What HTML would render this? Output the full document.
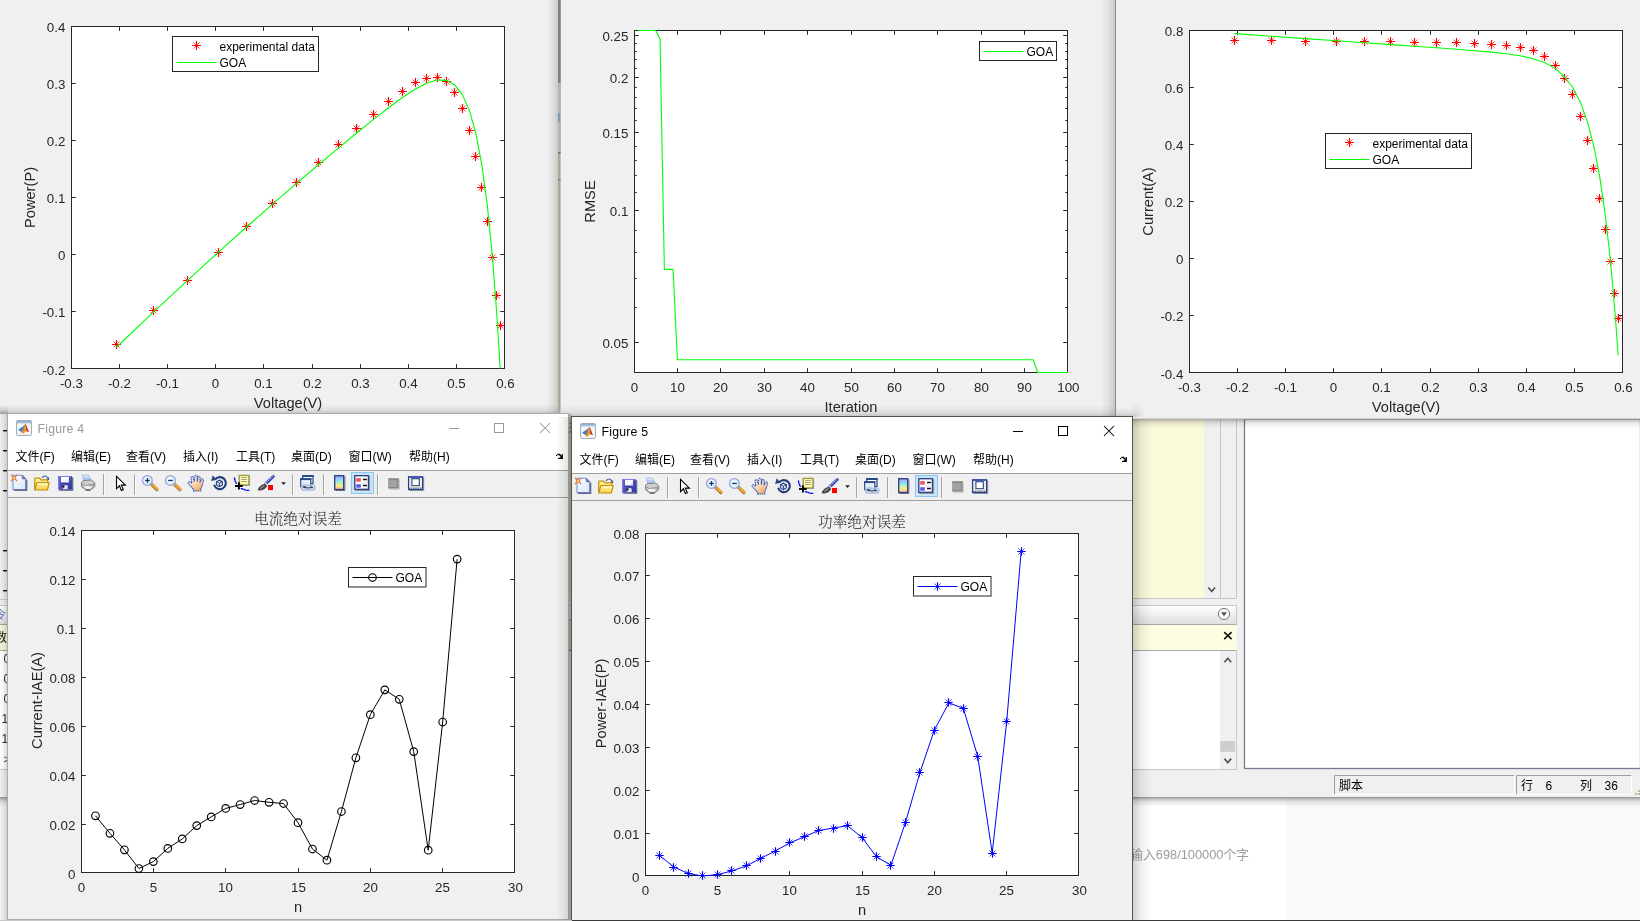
<!DOCTYPE html>
<html lang="zh-CN"><head><meta charset="utf-8"><title>MATLAB figures</title>
<style>
html,body{margin:0;padding:0;background:#f0f0f0;}
body{width:1640px;height:921px;overflow:hidden;position:relative;}
svg{position:absolute;left:0;top:0;display:block;font-family:"Liberation Sans", "Noto Sans CJK SC", sans-serif;will-change:transform;}
text{white-space:pre;}
</style></head><body>
<svg width="1640" height="921" viewBox="0 0 1640 921">
<defs>
<linearGradient id="shD" x1="0" y1="0" x2="0" y2="1"><stop offset="0" stop-color="#000" stop-opacity=".30"/><stop offset=".4" stop-color="#000" stop-opacity=".10"/><stop offset="1" stop-color="#000" stop-opacity="0"/></linearGradient>
<linearGradient id="shU" x1="0" y1="1" x2="0" y2="0"><stop offset="0" stop-color="#000" stop-opacity=".20"/><stop offset=".4" stop-color="#000" stop-opacity=".07"/><stop offset="1" stop-color="#000" stop-opacity="0"/></linearGradient>
<linearGradient id="shR" x1="0" y1="0" x2="1" y2="0"><stop offset="0" stop-color="#000" stop-opacity=".19"/><stop offset=".45" stop-color="#000" stop-opacity=".06"/><stop offset="1" stop-color="#000" stop-opacity="0"/></linearGradient>
<linearGradient id="shL" x1="1" y1="0" x2="0" y2="0"><stop offset="0" stop-color="#000" stop-opacity=".16"/><stop offset=".5" stop-color="#000" stop-opacity=".06"/><stop offset="1" stop-color="#000" stop-opacity="0"/></linearGradient>
<linearGradient id="hdr" x1="0" y1="0" x2="0" y2="1"><stop offset="0" stop-color="#fff"/><stop offset="1" stop-color="#dedede"/></linearGradient>
</defs>

<rect x="1132" y="797" width="154" height="124" fill="#fff"/><rect x="1286" y="797" width="354" height="124" fill="#fafafa"/><text x="1130.2" y="858.6" font-size="12.8" text-anchor="start" fill="#9c9ca0">输入698/100000个字</text><rect x="1132" y="419" width="508" height="378" fill="#f0f0f0"/><rect x="1132" y="419" width="72" height="179" fill="#fbfadb"/><path d="M1220.5 419V598M1236.5 419V598.5H1132" stroke="#c4c4c4" fill="none"/><path d="M1208.3 587.5l3.4 4 3.4-4" stroke="#555" stroke-width="1.7" fill="none"/><rect x="1132" y="605.5" width="104.5" height="19" fill="url(#hdr)" stroke="#c8c8c8"/><circle cx="1224" cy="614" r="5.6" fill="#fafafa" stroke="#777" stroke-width="1"/><path d="M1221 612.3h6l-3 4z" fill="#555"/><rect x="1132" y="625" width="104.5" height="25.5" fill="#fdfde1"/><path d="M1132 624.5H1236.5M1132 650.5H1236.5" stroke="#a8a8a8"/><path d="M1224.2 632.2l7.4 7M1231.6 632.2l-7.4 7" stroke="#111" stroke-width="1.6"/><rect x="1132" y="651" width="88" height="118" fill="#fff"/><rect x="1220" y="651" width="16.5" height="118" fill="#f0f0f0"/><path d="M1132 769.5H1236.5V651" stroke="#c8c8c8" fill="none"/><path d="M1224.4 662.3l3.4-4 3.4 4M1224.4 758.6l3.4 4 3.4-4" stroke="#555" stroke-width="1.7" fill="none"/><rect x="1220.3" y="741" width="14.6" height="10.8" fill="#cdcdcd"/><rect x="1244.5" y="419" width="396" height="349.5" fill="#fff" stroke="#737c8c" stroke-width="1.300"/><path d="M1334.5 794.5V775.5H1514.5" stroke="#a0a0a0" fill="none"/><path d="M1334.5 794.5H1514.5V775.5" stroke="#fff" fill="none"/><path d="M1516.5 794.5V775.5H1631.5" stroke="#a0a0a0" fill="none"/><path d="M1516.5 794.5H1631.5V775.5" stroke="#fff" fill="none"/><text x="1339" y="790" font-size="12" text-anchor="start" fill="#000">脚本</text><text x="1521" y="790" font-size="12" text-anchor="start" fill="#000">行</text><text x="1545.5" y="790" font-size="12" text-anchor="start" fill="#000">6</text><text x="1580" y="790" font-size="12" text-anchor="start" fill="#000">列</text><text x="1604.5" y="790" font-size="12" text-anchor="start" fill="#000">36</text><path d="M1638 790h2v2h-2zM1635 793h2v2h-2zM1638 793h2v2h-2z" fill="#b8b8a8"/><rect x="1132" y="797" width="508" height="1" fill="#9a9a9a"/><rect x="1132" y="798" width="508" height="9" fill="url(#shD)"/>
<rect x="0" y="414" width="8" height="507" fill="#f0f0f0"/><rect x="3" y="430" width="5" height="1.4" fill="#111"/><rect x="3" y="450" width="5" height="1.4" fill="#111"/><rect x="3" y="470" width="5" height="1.4" fill="#111"/><rect x="3" y="490" width="5" height="1.4" fill="#111"/><rect x="3" y="550" width="5" height="1.4" fill="#111"/><rect x="3" y="570" width="5" height="1.4" fill="#111"/><rect x="3" y="590" width="5" height="1.4" fill="#111"/><path d="M0 599.5H8M0 605.5H8" stroke="#c8c8c8"/><rect x="0" y="606" width="8" height="18.5" fill="url(#hdr)"/><text x="-5" y="619" font-size="11" text-anchor="start" fill="#5a78b8">令</text><rect x="0" y="625" width="8" height="25.5" fill="#f6f6d6"/><path d="M0 624.5H8M0 650.5H8" stroke="#a8a8a8"/><text x="-5" y="642" font-size="12" text-anchor="start" fill="#111">数</text><rect x="0" y="651" width="8" height="118" fill="#fff"/><text x="3.5" y="663" font-size="12" text-anchor="start" fill="#333">0</text><text x="3.5" y="683" font-size="12" text-anchor="start" fill="#333">0</text><text x="3.5" y="703" font-size="12" text-anchor="start" fill="#333">0</text><text x="1.6" y="723" font-size="12" text-anchor="start" fill="#3a2a30">1</text><text x="1.6" y="743" font-size="12" text-anchor="start" fill="#3a2a30">1</text><text x="3.5" y="763" font-size="11" text-anchor="start" fill="#4a3a4a">&gt;</text><rect x="0" y="769" width="8" height="1" fill="#c8c8c8"/><rect x="0" y="770" width="8" height="27" fill="#f0f0f0"/><rect x="0" y="797" width="8" height="1" fill="#9a9a9a"/><rect x="0" y="798" width="8" height="8" fill="url(#shD)"/><rect x="0" y="806" width="8" height="115" fill="#f4f4f4"/>
<rect x="0" y="0" width="558" height="414" fill="#f0f0f0"/>
<rect x="561" y="0" width="554" height="417" fill="#f0f0f0"/>
<rect x="1116" y="0" width="524" height="419" fill="#f0f0f0"/>
<rect x="0" y="404" width="558" height="10" fill="url(#shU)"/>
<rect x="561" y="405" width="554" height="12" fill="url(#shU)"/>
<rect x="1116" y="419" width="524" height="9" fill="url(#shD)"/>
<rect x="1116" y="418.5" width="524" height="1" fill="#b0b0b0"/>
<rect x="558" y="0" width="2.6" height="921" fill="#a9a995"/>
<rect x="558" y="0" width="2.6" height="83" fill="#7e7e7e"/><rect x="558" y="83" width="2.6" height="70" fill="#b4b4b4"/><rect x="558" y="152" width="2.6" height="1.600" fill="#727272"/><rect x="558" y="179" width="2.6" height="1.200" fill="#76766c"/><rect x="558.300" y="113" width="1.200" height="9" fill="#5a86c8"/><rect x="546" y="0" width="12" height="414" fill="url(#shL)"/>
<rect x="1101" y="0" width="14" height="417" fill="url(#shL)"/>
<rect x="1115" y="0" width="1" height="419" fill="#8a8a8a"/>
<g>
<rect x="71.5" y="26.5" width="433.0" height="342.0" fill="#fff"/><path d="M119.5 368.5v-4.3M119.5 26.5v4.3M167.5 368.5v-4.3M167.5 26.5v4.3M215.5 368.5v-4.3M215.5 26.5v4.3M263.5 368.5v-4.3M263.5 26.5v4.3M312.5 368.5v-4.3M312.5 26.5v4.3M360.5 368.5v-4.3M360.5 26.5v4.3M408.5 368.5v-4.3M408.5 26.5v4.3M456.5 368.5v-4.3M456.5 26.5v4.3M71.5 83.5h4.3M504.5 83.5h-4.3M71.5 140.5h4.3M504.5 140.5h-4.3M71.5 197.5h4.3M504.5 197.5h-4.3M71.5 254.5h4.3M504.5 254.5h-4.3M71.5 311.5h4.3M504.5 311.5h-4.3" stroke="#262626" stroke-width="1" fill="none"/><rect x="71.5" y="26.5" width="433.0" height="342.0" fill="none" stroke="#262626" stroke-width="1"/><text x="71.4" y="388.2" font-size="13.33" text-anchor="middle" fill="#262626">-0.3</text><text x="119.4" y="388.2" font-size="13.33" text-anchor="middle" fill="#262626">-0.2</text><text x="167.4" y="388.2" font-size="13.33" text-anchor="middle" fill="#262626">-0.1</text><text x="215.4" y="388.2" font-size="13.33" text-anchor="middle" fill="#262626">0</text><text x="263.4" y="388.2" font-size="13.33" text-anchor="middle" fill="#262626">0.1</text><text x="312.4" y="388.2" font-size="13.33" text-anchor="middle" fill="#262626">0.2</text><text x="360.4" y="388.2" font-size="13.33" text-anchor="middle" fill="#262626">0.3</text><text x="408.4" y="388.2" font-size="13.33" text-anchor="middle" fill="#262626">0.4</text><text x="456.4" y="388.2" font-size="13.33" text-anchor="middle" fill="#262626">0.5</text><text x="505.4" y="388.2" font-size="13.33" text-anchor="middle" fill="#262626">0.6</text><text x="65.4" y="32.15" font-size="13.33" text-anchor="end" fill="#262626">0.4</text><text x="65.4" y="89.15" font-size="13.33" text-anchor="end" fill="#262626">0.3</text><text x="65.4" y="146.15" font-size="13.33" text-anchor="end" fill="#262626">0.2</text><text x="65.4" y="203.15" font-size="13.33" text-anchor="end" fill="#262626">0.1</text><text x="65.4" y="260.15" font-size="13.33" text-anchor="end" fill="#262626">0</text><text x="65.4" y="317.15" font-size="13.33" text-anchor="end" fill="#262626">-0.1</text><text x="65.4" y="375.15" font-size="13.33" text-anchor="end" fill="#262626">-0.2</text><text x="288" y="407.5" font-size="14.67" text-anchor="middle" fill="#262626">Voltage(V)</text><text transform="translate(34.5 197.5) rotate(-90)" font-size="14.67" text-anchor="middle" fill="#262626">Power(P)</text>
<clipPath id="c1"><rect x="71.5" y="25.5" width="433.0" height="343.0"/></clipPath><g clip-path="url(#c1)">
<path d="M112 344.5H121M116.5 340V349" stroke="#ff0000" stroke-width="1.15" fill="none"/><path d="M113.5 341.5L119.5 347.5M113.5 347.5L119.5 341.5" stroke="#ff0000" stroke-width="0.9" stroke-opacity=".8" fill="none"/>
<path d="M149 310.5H158M153.5 306V315" stroke="#ff0000" stroke-width="1.15" fill="none"/><path d="M150.5 307.5L156.5 313.5M150.5 313.5L156.5 307.5" stroke="#ff0000" stroke-width="0.9" stroke-opacity=".8" fill="none"/>
<path d="M183 280.5H192M187.5 276V285" stroke="#ff0000" stroke-width="1.15" fill="none"/><path d="M184.5 277.5L190.5 283.5M184.5 283.5L190.5 277.5" stroke="#ff0000" stroke-width="0.9" stroke-opacity=".8" fill="none"/>
<path d="M214 252.5H223M218.5 248V257" stroke="#ff0000" stroke-width="1.15" fill="none"/><path d="M215.5 249.5L221.5 255.5M215.5 255.5L221.5 249.5" stroke="#ff0000" stroke-width="0.9" stroke-opacity=".8" fill="none"/>
<path d="M242 226.5H251M246.5 222V231" stroke="#ff0000" stroke-width="1.15" fill="none"/><path d="M243.5 223.5L249.5 229.5M243.5 229.5L249.5 223.5" stroke="#ff0000" stroke-width="0.9" stroke-opacity=".8" fill="none"/>
<path d="M268 203.5H277M272.5 199V208" stroke="#ff0000" stroke-width="1.15" fill="none"/><path d="M269.5 200.5L275.5 206.5M269.5 206.5L275.5 200.5" stroke="#ff0000" stroke-width="0.9" stroke-opacity=".8" fill="none"/>
<path d="M292 182.5H301M296.5 178V187" stroke="#ff0000" stroke-width="1.15" fill="none"/><path d="M293.5 179.5L299.5 185.5M293.5 185.5L299.5 179.5" stroke="#ff0000" stroke-width="0.9" stroke-opacity=".8" fill="none"/>
<path d="M314 162.5H323M318.5 158V167" stroke="#ff0000" stroke-width="1.15" fill="none"/><path d="M315.5 159.5L321.5 165.5M315.5 165.5L321.5 159.5" stroke="#ff0000" stroke-width="0.9" stroke-opacity=".8" fill="none"/>
<path d="M334 144.5H343M338.5 140V149" stroke="#ff0000" stroke-width="1.15" fill="none"/><path d="M335.5 141.5L341.5 147.5M335.5 147.5L341.5 141.5" stroke="#ff0000" stroke-width="0.9" stroke-opacity=".8" fill="none"/>
<path d="M352 128.5H361M356.5 124V133" stroke="#ff0000" stroke-width="1.15" fill="none"/><path d="M353.5 125.5L359.5 131.5M353.5 131.5L359.5 125.5" stroke="#ff0000" stroke-width="0.9" stroke-opacity=".8" fill="none"/>
<path d="M369 114.5H378M373.5 110V119" stroke="#ff0000" stroke-width="1.15" fill="none"/><path d="M370.5 111.5L376.5 117.5M370.5 117.5L376.5 111.5" stroke="#ff0000" stroke-width="0.9" stroke-opacity=".8" fill="none"/>
<path d="M384 101.5H393M388.5 97V106" stroke="#ff0000" stroke-width="1.15" fill="none"/><path d="M385.5 98.5L391.5 104.5M385.5 104.5L391.5 98.5" stroke="#ff0000" stroke-width="0.9" stroke-opacity=".8" fill="none"/>
<path d="M398 91.5H407M402.5 87V96" stroke="#ff0000" stroke-width="1.15" fill="none"/><path d="M399.5 88.5L405.5 94.5M399.5 94.5L405.5 88.5" stroke="#ff0000" stroke-width="0.9" stroke-opacity=".8" fill="none"/>
<path d="M411 82.5H420M415.5 78V87" stroke="#ff0000" stroke-width="1.15" fill="none"/><path d="M412.5 79.5L418.5 85.5M412.5 85.5L418.5 79.5" stroke="#ff0000" stroke-width="0.9" stroke-opacity=".8" fill="none"/>
<path d="M422 78.5H431M426.5 74V83" stroke="#ff0000" stroke-width="1.15" fill="none"/><path d="M423.5 75.5L429.5 81.5M423.5 81.5L429.5 75.5" stroke="#ff0000" stroke-width="0.9" stroke-opacity=".8" fill="none"/>
<path d="M433 77.5H442M437.5 73V82" stroke="#ff0000" stroke-width="1.15" fill="none"/><path d="M434.5 74.5L440.5 80.5M434.5 80.5L440.5 74.5" stroke="#ff0000" stroke-width="0.9" stroke-opacity=".8" fill="none"/>
<path d="M442 81.5H451M446.5 77V86" stroke="#ff0000" stroke-width="1.15" fill="none"/><path d="M443.5 78.5L449.5 84.5M443.5 84.5L449.5 78.5" stroke="#ff0000" stroke-width="0.9" stroke-opacity=".8" fill="none"/>
<path d="M450 92.5H459M454.5 88V97" stroke="#ff0000" stroke-width="1.15" fill="none"/><path d="M451.5 89.5L457.5 95.5M451.5 95.5L457.5 89.5" stroke="#ff0000" stroke-width="0.9" stroke-opacity=".8" fill="none"/>
<path d="M458 108.5H467M462.5 104V113" stroke="#ff0000" stroke-width="1.15" fill="none"/><path d="M459.5 105.5L465.5 111.5M459.5 111.5L465.5 105.5" stroke="#ff0000" stroke-width="0.9" stroke-opacity=".8" fill="none"/>
<path d="M465 130.5H474M469.5 126V135" stroke="#ff0000" stroke-width="1.15" fill="none"/><path d="M466.5 127.5L472.5 133.5M466.5 133.5L472.5 127.5" stroke="#ff0000" stroke-width="0.9" stroke-opacity=".8" fill="none"/>
<path d="M471 156.5H480M475.5 152V161" stroke="#ff0000" stroke-width="1.15" fill="none"/><path d="M472.5 153.5L478.5 159.5M472.5 159.5L478.5 153.5" stroke="#ff0000" stroke-width="0.9" stroke-opacity=".8" fill="none"/>
<path d="M477 187.5H486M481.5 183V192" stroke="#ff0000" stroke-width="1.15" fill="none"/><path d="M478.5 184.5L484.5 190.5M478.5 190.5L484.5 184.5" stroke="#ff0000" stroke-width="0.9" stroke-opacity=".8" fill="none"/>
<path d="M483 221.5H492M487.5 217V226" stroke="#ff0000" stroke-width="1.15" fill="none"/><path d="M484.5 218.5L490.5 224.5M484.5 224.5L490.5 218.5" stroke="#ff0000" stroke-width="0.9" stroke-opacity=".8" fill="none"/>
<path d="M488 257.5H497M492.5 253V262" stroke="#ff0000" stroke-width="1.15" fill="none"/><path d="M489.5 254.5L495.5 260.5M489.5 260.5L495.5 254.5" stroke="#ff0000" stroke-width="0.9" stroke-opacity=".8" fill="none"/>
<path d="M492 295.5H501M496.5 291V300" stroke="#ff0000" stroke-width="1.15" fill="none"/><path d="M493.5 292.5L499.5 298.5M493.5 298.5L499.5 292.5" stroke="#ff0000" stroke-width="0.9" stroke-opacity=".8" fill="none"/>
<path d="M496 325.5H505M500.5 321V330" stroke="#ff0000" stroke-width="1.15" fill="none"/><path d="M497.5 322.5L503.5 328.5M497.5 328.5L503.5 322.5" stroke="#ff0000" stroke-width="0.9" stroke-opacity=".8" fill="none"/>
<polyline points="116.47,347.25 153.41,312.1 187.31,280.55 218.42,252.18 246.82,226.77 272.81,203.93 296.58,183.39 318.48,164.76 338.39,148.08 356.67,133.04 373.31,119.64 388.54,107.74 402.43,97.55 415.16,89.2 426.54,83.18 437.01,79.99 446.36,80.4 454.85,85.08 462.52,94.88 469.56,110.91 475.97,133.93 481.9,165.38 487.3,205.38 492.27,254.89 496.95,316.23 500.18,368.71" fill="none" stroke="#00ff00" stroke-width="1.1" stroke-linejoin="round"/>
</g>
<rect x="172.5" y="36.5" width="146" height="35" fill="#fff" stroke="#262626"/>
<path d="M192 45.5H201M196.5 41V50" stroke="#ff0000" stroke-width="1.15" fill="none"/><path d="M193.5 42.5L199.5 48.5M193.5 48.5L199.5 42.5" stroke="#ff0000" stroke-width="0.9" stroke-opacity=".8" fill="none"/>
<path d="M176.5 62.5H216.5" stroke="#00ff00" stroke-width="1.1"/>
<text x="219.5" y="50.6" font-size="12" text-anchor="start" fill="#000">experimental data</text>
<text x="219.5" y="66.6" font-size="12" text-anchor="start" fill="#000">GOA</text>
</g>
<g>
<rect x="634.5" y="30.5" width="433.0" height="342.0" fill="#fff"/><path d="M677.5 372.5v-4.3M677.5 30.5v4.3M720.5 372.5v-4.3M720.5 30.5v4.3M764.5 372.5v-4.3M764.5 30.5v4.3M807.5 372.5v-4.3M807.5 30.5v4.3M851.5 372.5v-4.3M851.5 30.5v4.3M894.5 372.5v-4.3M894.5 30.5v4.3M937.5 372.5v-4.3M937.5 30.5v4.3M981.5 372.5v-4.3M981.5 30.5v4.3M1024.5 372.5v-4.3M1024.5 30.5v4.3M634.5 35.5h4.3M1067.5 35.5h-4.3M634.5 77.5h4.3M1067.5 77.5h-4.3M634.5 132.5h4.3M1067.5 132.5h-4.3M634.5 210.5h4.3M1067.5 210.5h-4.3M634.5 342.5h4.3M1067.5 342.5h-4.3M634.5 43.5h2.2M1067.5 43.5h-2.2M634.5 51.5h2.2M1067.5 51.5h-2.2M634.5 59.5h2.2M1067.5 59.5h-2.2M634.5 68.5h2.2M1067.5 68.5h-2.2M634.5 87.5h2.2M1067.5 87.5h-2.2M634.5 97.5h2.2M1067.5 97.5h-2.2M634.5 108.5h2.2M1067.5 108.5h-2.2M634.5 120.5h2.2M1067.5 120.5h-2.2M634.5 146.5h2.2M1067.5 146.5h-2.2M634.5 160.5h2.2M1067.5 160.5h-2.2M634.5 175.5h2.2M1067.5 175.5h-2.2M634.5 192.5h2.2M1067.5 192.5h-2.2M634.5 230.5h2.2M1067.5 230.5h-2.2M634.5 252.5h2.2M1067.5 252.5h-2.2M634.5 278.5h2.2M1067.5 278.5h-2.2M634.5 307.5h2.2M1067.5 307.5h-2.2" stroke="#262626" stroke-width="1" fill="none"/><rect x="634.5" y="30.5" width="433.0" height="342.0" fill="none" stroke="#262626" stroke-width="1"/><text x="634.4" y="392.2" font-size="13.33" text-anchor="middle" fill="#262626">0</text><text x="677.4" y="392.2" font-size="13.33" text-anchor="middle" fill="#262626">10</text><text x="720.4" y="392.2" font-size="13.33" text-anchor="middle" fill="#262626">20</text><text x="764.4" y="392.2" font-size="13.33" text-anchor="middle" fill="#262626">30</text><text x="807.4" y="392.2" font-size="13.33" text-anchor="middle" fill="#262626">40</text><text x="851.4" y="392.2" font-size="13.33" text-anchor="middle" fill="#262626">50</text><text x="894.4" y="392.2" font-size="13.33" text-anchor="middle" fill="#262626">60</text><text x="937.4" y="392.2" font-size="13.33" text-anchor="middle" fill="#262626">70</text><text x="981.4" y="392.2" font-size="13.33" text-anchor="middle" fill="#262626">80</text><text x="1024.4" y="392.2" font-size="13.33" text-anchor="middle" fill="#262626">90</text><text x="1068.4" y="392.2" font-size="13.33" text-anchor="middle" fill="#262626">100</text><text x="628.4" y="41.15" font-size="13.33" text-anchor="end" fill="#262626">0.25</text><text x="628.4" y="83.15" font-size="13.33" text-anchor="end" fill="#262626">0.2</text><text x="628.4" y="138.15" font-size="13.33" text-anchor="end" fill="#262626">0.15</text><text x="628.4" y="216.15" font-size="13.33" text-anchor="end" fill="#262626">0.1</text><text x="628.4" y="348.15" font-size="13.33" text-anchor="end" fill="#262626">0.05</text><text x="851" y="411.5" font-size="14.67" text-anchor="middle" fill="#262626">Iteration</text><text transform="translate(595 201.5) rotate(-90)" font-size="14.67" text-anchor="middle" fill="#262626">RMSE</text>
<polyline points="638.34,30.5 642.68,30.5 647.02,30.5 651.36,30.5 655.7,30.5 660.04,39.07 664.38,269.39 668.72,269.39 673.06,269.39 677.4,359.73 681.74,359.73 686.08,359.73 690.42,359.73 694.76,359.73 699.1,359.73 703.44,359.73 707.78,359.73 712.12,359.73 716.46,359.73 720.8,359.73 725.14,359.73 729.48,359.73 733.82,359.73 738.16,359.73 742.5,359.73 746.84,359.73 751.18,359.73 755.52,359.73 759.86,359.73 764.2,359.73 768.54,359.73 772.88,359.73 777.22,359.73 781.56,359.73 785.9,359.73 790.24,359.73 794.58,359.73 798.92,359.73 803.26,359.73 807.6,359.73 811.94,359.73 816.28,359.73 820.62,359.73 824.96,359.73 829.3,359.73 833.64,359.73 837.98,359.73 842.32,359.73 846.66,359.73 851,359.73 855.34,359.73 859.68,359.73 864.02,359.73 868.36,359.73 872.7,359.73 877.04,359.73 881.38,359.73 885.72,359.73 890.06,359.73 894.4,359.73 898.74,359.73 903.08,359.73 907.42,359.73 911.76,359.73 916.1,359.73 920.44,359.73 924.78,359.73 929.12,359.73 933.46,359.73 937.8,359.73 942.14,359.73 946.48,359.73 950.82,359.73 955.16,359.73 959.5,359.73 963.84,359.73 968.18,359.73 972.52,359.73 976.86,359.73 981.2,359.73 985.54,359.73 989.88,359.73 994.22,359.73 998.56,359.73 1002.9,359.73 1007.24,359.73 1011.58,359.73 1015.92,359.73 1020.26,359.73 1024.6,359.73 1028.94,359.73 1033.28,359.73 1037.62,372.5 1041.96,372.5 1046.3,372.5 1050.64,372.5 1054.98,372.5 1059.32,372.5 1063.66,372.5 1068,372.5" fill="none" stroke="#00ff00" stroke-width="1.1" stroke-linejoin="round"/>
<rect x="979.5" y="41.5" width="77" height="19" fill="#fff" stroke="#262626"/>
<path d="M983.5 51.5H1023.5" stroke="#00ff00" stroke-width="1.1"/>
<text x="1026.5" y="55.7" font-size="12" text-anchor="start" fill="#000">GOA</text>
</g>
<g>
<rect x="1189.5" y="30.5" width="433.0" height="342.0" fill="#fff"/><path d="M1237.5 372.5v-4.3M1237.5 30.5v4.3M1285.5 372.5v-4.3M1285.5 30.5v4.3M1333.5 372.5v-4.3M1333.5 30.5v4.3M1381.5 372.5v-4.3M1381.5 30.5v4.3M1430.5 372.5v-4.3M1430.5 30.5v4.3M1478.5 372.5v-4.3M1478.5 30.5v4.3M1526.5 372.5v-4.3M1526.5 30.5v4.3M1574.5 372.5v-4.3M1574.5 30.5v4.3M1189.5 87.5h4.3M1622.5 87.5h-4.3M1189.5 144.5h4.3M1622.5 144.5h-4.3M1189.5 201.5h4.3M1622.5 201.5h-4.3M1189.5 258.5h4.3M1622.5 258.5h-4.3M1189.5 315.5h4.3M1622.5 315.5h-4.3" stroke="#262626" stroke-width="1" fill="none"/><rect x="1189.5" y="30.5" width="433.0" height="342.0" fill="none" stroke="#262626" stroke-width="1"/><text x="1189.4" y="392.2" font-size="13.33" text-anchor="middle" fill="#262626">-0.3</text><text x="1237.4" y="392.2" font-size="13.33" text-anchor="middle" fill="#262626">-0.2</text><text x="1285.4" y="392.2" font-size="13.33" text-anchor="middle" fill="#262626">-0.1</text><text x="1333.4" y="392.2" font-size="13.33" text-anchor="middle" fill="#262626">0</text><text x="1381.4" y="392.2" font-size="13.33" text-anchor="middle" fill="#262626">0.1</text><text x="1430.4" y="392.2" font-size="13.33" text-anchor="middle" fill="#262626">0.2</text><text x="1478.4" y="392.2" font-size="13.33" text-anchor="middle" fill="#262626">0.3</text><text x="1526.4" y="392.2" font-size="13.33" text-anchor="middle" fill="#262626">0.4</text><text x="1574.4" y="392.2" font-size="13.33" text-anchor="middle" fill="#262626">0.5</text><text x="1623.4" y="392.2" font-size="13.33" text-anchor="middle" fill="#262626">0.6</text><text x="1183.4" y="36.15" font-size="13.33" text-anchor="end" fill="#262626">0.8</text><text x="1183.4" y="93.15" font-size="13.33" text-anchor="end" fill="#262626">0.6</text><text x="1183.4" y="150.15" font-size="13.33" text-anchor="end" fill="#262626">0.4</text><text x="1183.4" y="207.15" font-size="13.33" text-anchor="end" fill="#262626">0.2</text><text x="1183.4" y="264.15" font-size="13.33" text-anchor="end" fill="#262626">0</text><text x="1183.4" y="321.15" font-size="13.33" text-anchor="end" fill="#262626">-0.2</text><text x="1183.4" y="379.15" font-size="13.33" text-anchor="end" fill="#262626">-0.4</text><text x="1406" y="411.5" font-size="14.67" text-anchor="middle" fill="#262626">Voltage(V)</text><text transform="translate(1153 201.5) rotate(-90)" font-size="14.67" text-anchor="middle" fill="#262626">Current(A)</text>
<clipPath id="c3"><rect x="1189.5" y="29.5" width="433.0" height="343.0"/></clipPath><g clip-path="url(#c3)">
<path d="M1230 40.5H1239M1234.5 36V45" stroke="#ff0000" stroke-width="1.15" fill="none"/><path d="M1231.5 37.5L1237.5 43.5M1231.5 43.5L1237.5 37.5" stroke="#ff0000" stroke-width="0.9" stroke-opacity=".8" fill="none"/>
<path d="M1267 40.5H1276M1271.5 36V45" stroke="#ff0000" stroke-width="1.15" fill="none"/><path d="M1268.5 37.5L1274.5 43.5M1268.5 43.5L1274.5 37.5" stroke="#ff0000" stroke-width="0.9" stroke-opacity=".8" fill="none"/>
<path d="M1301 41.5H1310M1305.5 37V46" stroke="#ff0000" stroke-width="1.15" fill="none"/><path d="M1302.5 38.5L1308.5 44.5M1302.5 44.5L1308.5 38.5" stroke="#ff0000" stroke-width="0.9" stroke-opacity=".8" fill="none"/>
<path d="M1332 41.5H1341M1336.5 37V46" stroke="#ff0000" stroke-width="1.15" fill="none"/><path d="M1333.5 38.5L1339.5 44.5M1333.5 44.5L1339.5 38.5" stroke="#ff0000" stroke-width="0.9" stroke-opacity=".8" fill="none"/>
<path d="M1360 41.5H1369M1364.5 37V46" stroke="#ff0000" stroke-width="1.15" fill="none"/><path d="M1361.5 38.5L1367.5 44.5M1361.5 44.5L1367.5 38.5" stroke="#ff0000" stroke-width="0.9" stroke-opacity=".8" fill="none"/>
<path d="M1386 41.5H1395M1390.5 37V46" stroke="#ff0000" stroke-width="1.15" fill="none"/><path d="M1387.5 38.5L1393.5 44.5M1387.5 44.5L1393.5 38.5" stroke="#ff0000" stroke-width="0.9" stroke-opacity=".8" fill="none"/>
<path d="M1410 42.5H1419M1414.5 38V47" stroke="#ff0000" stroke-width="1.15" fill="none"/><path d="M1411.5 39.5L1417.5 45.5M1411.5 45.5L1417.5 39.5" stroke="#ff0000" stroke-width="0.9" stroke-opacity=".8" fill="none"/>
<path d="M1432 42.5H1441M1436.5 38V47" stroke="#ff0000" stroke-width="1.15" fill="none"/><path d="M1433.5 39.5L1439.5 45.5M1433.5 45.5L1439.5 39.5" stroke="#ff0000" stroke-width="0.9" stroke-opacity=".8" fill="none"/>
<path d="M1452 42.5H1461M1456.5 38V47" stroke="#ff0000" stroke-width="1.15" fill="none"/><path d="M1453.5 39.5L1459.5 45.5M1453.5 45.5L1459.5 39.5" stroke="#ff0000" stroke-width="0.9" stroke-opacity=".8" fill="none"/>
<path d="M1470 43.5H1479M1474.5 39V48" stroke="#ff0000" stroke-width="1.15" fill="none"/><path d="M1471.5 40.5L1477.5 46.5M1471.5 46.5L1477.5 40.5" stroke="#ff0000" stroke-width="0.9" stroke-opacity=".8" fill="none"/>
<path d="M1487 44.5H1496M1491.5 40V49" stroke="#ff0000" stroke-width="1.15" fill="none"/><path d="M1488.5 41.5L1494.5 47.5M1488.5 47.5L1494.5 41.5" stroke="#ff0000" stroke-width="0.9" stroke-opacity=".8" fill="none"/>
<path d="M1502 45.5H1511M1506.5 41V50" stroke="#ff0000" stroke-width="1.15" fill="none"/><path d="M1503.5 42.5L1509.5 48.5M1503.5 48.5L1509.5 42.5" stroke="#ff0000" stroke-width="0.9" stroke-opacity=".8" fill="none"/>
<path d="M1516 47.5H1525M1520.5 43V52" stroke="#ff0000" stroke-width="1.15" fill="none"/><path d="M1517.5 44.5L1523.5 50.5M1517.5 50.5L1523.5 44.5" stroke="#ff0000" stroke-width="0.9" stroke-opacity=".8" fill="none"/>
<path d="M1529 50.5H1538M1533.5 46V55" stroke="#ff0000" stroke-width="1.15" fill="none"/><path d="M1530.5 47.5L1536.5 53.5M1530.5 53.5L1536.5 47.5" stroke="#ff0000" stroke-width="0.9" stroke-opacity=".8" fill="none"/>
<path d="M1540 56.5H1549M1544.5 52V61" stroke="#ff0000" stroke-width="1.15" fill="none"/><path d="M1541.5 53.5L1547.5 59.5M1541.5 59.5L1547.5 53.5" stroke="#ff0000" stroke-width="0.9" stroke-opacity=".8" fill="none"/>
<path d="M1551 65.5H1560M1555.5 61V70" stroke="#ff0000" stroke-width="1.15" fill="none"/><path d="M1552.5 62.5L1558.5 68.5M1552.5 68.5L1558.5 62.5" stroke="#ff0000" stroke-width="0.9" stroke-opacity=".8" fill="none"/>
<path d="M1560 78.5H1569M1564.5 74V83" stroke="#ff0000" stroke-width="1.15" fill="none"/><path d="M1561.5 75.5L1567.5 81.5M1561.5 81.5L1567.5 75.5" stroke="#ff0000" stroke-width="0.9" stroke-opacity=".8" fill="none"/>
<path d="M1568 94.5H1577M1572.5 90V99" stroke="#ff0000" stroke-width="1.15" fill="none"/><path d="M1569.5 91.5L1575.5 97.5M1569.5 97.5L1575.5 91.5" stroke="#ff0000" stroke-width="0.9" stroke-opacity=".8" fill="none"/>
<path d="M1576 116.5H1585M1580.5 112V121" stroke="#ff0000" stroke-width="1.15" fill="none"/><path d="M1577.5 113.5L1583.5 119.5M1577.5 119.5L1583.5 113.5" stroke="#ff0000" stroke-width="0.9" stroke-opacity=".8" fill="none"/>
<path d="M1583 140.5H1592M1587.5 136V145" stroke="#ff0000" stroke-width="1.15" fill="none"/><path d="M1584.5 137.5L1590.5 143.5M1584.5 143.5L1590.5 137.5" stroke="#ff0000" stroke-width="0.9" stroke-opacity=".8" fill="none"/>
<path d="M1589 168.5H1598M1593.5 164V173" stroke="#ff0000" stroke-width="1.15" fill="none"/><path d="M1590.5 165.5L1596.5 171.5M1590.5 171.5L1596.5 165.5" stroke="#ff0000" stroke-width="0.9" stroke-opacity=".8" fill="none"/>
<path d="M1595 198.5H1604M1599.5 194V203" stroke="#ff0000" stroke-width="1.15" fill="none"/><path d="M1596.5 195.5L1602.5 201.5M1596.5 201.5L1602.5 195.5" stroke="#ff0000" stroke-width="0.9" stroke-opacity=".8" fill="none"/>
<path d="M1601 229.5H1610M1605.5 225V234" stroke="#ff0000" stroke-width="1.15" fill="none"/><path d="M1602.5 226.5L1608.5 232.5M1602.5 232.5L1608.5 226.5" stroke="#ff0000" stroke-width="0.9" stroke-opacity=".8" fill="none"/>
<path d="M1606 261.5H1615M1610.5 257V266" stroke="#ff0000" stroke-width="1.15" fill="none"/><path d="M1607.5 258.5L1613.5 264.5M1607.5 264.5L1613.5 258.5" stroke="#ff0000" stroke-width="0.9" stroke-opacity=".8" fill="none"/>
<path d="M1610 293.5H1619M1614.5 289V298" stroke="#ff0000" stroke-width="1.15" fill="none"/><path d="M1611.5 290.5L1617.5 296.5M1611.5 296.5L1617.5 290.5" stroke="#ff0000" stroke-width="0.9" stroke-opacity=".8" fill="none"/>
<path d="M1614 318.5H1623M1618.5 314V323" stroke="#ff0000" stroke-width="1.15" fill="none"/><path d="M1615.5 315.5L1621.5 321.5M1615.5 321.5L1621.5 315.5" stroke="#ff0000" stroke-width="0.9" stroke-opacity=".8" fill="none"/>
<polyline points="1234.47,33.62 1271.41,36.23 1305.31,38.58 1336.42,40.77 1364.82,42.76 1390.81,44.59 1414.58,46.27 1436.48,47.82 1456.39,49.26 1474.67,50.68 1491.31,52.13 1506.54,53.75 1520.43,55.83 1533.16,58.69 1544.54,62.59 1555.01,68.39 1564.36,76.53 1572.85,87.71 1580.52,102.6 1587.56,122.14 1593.97,146.83 1599.9,177.8 1605.3,214.92 1610.27,258.87 1614.95,311.44 1618.18,355.31" fill="none" stroke="#00ff00" stroke-width="1.1" stroke-linejoin="round"/>
</g>
<rect x="1325.5" y="133.5" width="146" height="35" fill="#fff" stroke="#262626"/>
<path d="M1345 142.5H1354M1349.5 138V147" stroke="#ff0000" stroke-width="1.15" fill="none"/><path d="M1346.5 139.5L1352.5 145.5M1346.5 145.5L1352.5 139.5" stroke="#ff0000" stroke-width="0.9" stroke-opacity=".8" fill="none"/>
<path d="M1329.5 159.5H1369.5" stroke="#00ff00" stroke-width="1.1"/>
<text x="1372.5" y="147.6" font-size="12" text-anchor="start" fill="#000">experimental data</text>
<text x="1372.5" y="163.6" font-size="12" text-anchor="start" fill="#000">GOA</text>
</g>
<rect x="568.500" y="414" width="3" height="507" fill="#a9a995"/><rect x="568.500" y="598" width="3" height="22" fill="#b2b2b2"/><rect x="568.500" y="605" width="3" height="1" fill="#8c8c8c"/><rect x="568.500" y="619.5" width="3" height="1" fill="#666"/><rect x="568.500" y="650" width="3" height="1" fill="#555"/><rect x="568.500" y="651" width="3" height="270" fill="#b6b6b6"/><path d="M570 424l1.200-2M569.600 428.500l1.600-2.500M569.400 433l1.300-2.500" stroke="#1c7a1c" stroke-width="1"/>
<rect x="0" y="405" width="8" height="9" fill="url(#shU)"/>
<rect x="1132.500" y="419" width="20" height="502" fill="url(#shR)"/>
<rect x="0" y="414" width="7.500" height="507" fill="url(#shL)"/>
<rect x="7.5" y="413.5" width="561" height="506" fill="#f0f0f0" stroke="#ababab"/><rect x="8" y="414" width="560" height="56.500" fill="#fff"/><g transform="translate(16 420)"><rect x=".5" y=".5" width="15" height="15" rx="1.200" fill="#f4f4f6" stroke="#a4acb8"/><rect x="1" y="1" width="14" height="1.700" fill="#86b6e2"/><path d="M.8 3.100h14.400" stroke="#b4bcc8" stroke-width=".7"/><path d="M2 9.700L7.600 6l2-2.200L7 10.400 5.400 12z" fill="#3c84c8"/><path d="M9.400 3.900c.8.600 1.600 3.400 3.400 8.200-.900-.2-1.700-1.100-2.500-1.100s-1.900 1.700-3.100 2.600c-.7-.4-1.300-.9-1.800-1.600 1.500-1.400 2.600-5.100 4-8.100z" fill="#e2582a"/><path d="M9.400 3.900c.5 1.300.7 4 .9 7.100-1 .1-2 1.500-3.100 2.600-.5-.3-.9-.6-1.200-1 1.400-1.800 2.400-5.300 3.400-8.700z" fill="#f49a2c"/><path d="M9.400 3.900c.7 1 1.900 4.100 3.400 8.200-1-.3-1.600-1-2.300-1.100-.3-3-.7-5.600-1.100-7.100z" fill="#b83a2c"/></g><text x="37.5" y="433.3" font-size="12.3" text-anchor="start" fill="#999" letter-spacing=".2">Figure 4</text><path d="M449 428.5h10" stroke="#999" stroke-width="1"/><rect x="494.5" y="423.5" width="9" height="9" fill="none" stroke="#999" stroke-width="1"/><path d="M540 423.0l10 10M550 423.0l-10 10" stroke="#999" stroke-width="1.050"/><text x="15.5" y="461.3" font-size="12" text-anchor="start" fill="#000">文件(F)</text><text x="71" y="461.3" font-size="12" text-anchor="start" fill="#000">编辑(E)</text><text x="126" y="461.3" font-size="12" text-anchor="start" fill="#000">查看(V)</text><text x="183" y="461.3" font-size="12" text-anchor="start" fill="#000">插入(I)</text><text x="236" y="461.3" font-size="12" text-anchor="start" fill="#000">工具(T)</text><text x="291" y="461.3" font-size="12" text-anchor="start" fill="#000">桌面(D)</text><text x="348.5" y="461.3" font-size="12" text-anchor="start" fill="#000">窗口(W)</text><text x="409" y="461.3" font-size="12" text-anchor="start" fill="#000">帮助(H)</text><g transform="translate(8 414)"><rect x="548" y="41" width="1.1" height="1.1" fill="#000"/><path d="M549.300 40.600H551.600L553.800 43" stroke="#000" stroke-width="1.500" fill="none"/><path d="M554.900 40V44.900H550V43.900L552.200 43.600L553.700 42L553.900 40z" fill="#000"/></g><path d="M8 470.5h560" stroke="#a0a0a0"/><path d="M8 497.5h560" stroke="#a0a0a0"/><defs><linearGradient id="pg8" x1="0" y1="0" x2="1" y2="1"><stop offset="0" stop-color="#ffffff"/><stop offset="1" stop-color="#d4e6fc"/></linearGradient><linearGradient id="fo8" x1="0" y1="0" x2="0" y2="1"><stop offset="0" stop-color="#fffaa8"/><stop offset="1" stop-color="#f6cc48"/></linearGradient><linearGradient id="sv8" x1="0" y1="0" x2="1" y2="1"><stop offset="0" stop-color="#6666dc"/><stop offset="1" stop-color="#34349a"/></linearGradient><linearGradient id="hd8" x1="0" y1="0" x2=".6" y2="1"><stop offset="0" stop-color="#fff0d8"/><stop offset=".5" stop-color="#fde0c4"/><stop offset="1" stop-color="#eeac6c"/></linearGradient><linearGradient id="ln8" x1="0" y1="0" x2="1" y2="1"><stop offset="0" stop-color="#ffffff"/><stop offset="1" stop-color="#c4eef4"/></linearGradient><linearGradient id="cb8" x1="0" y1="0" x2="0" y2="1"><stop offset="0" stop-color="#a49cf8"/><stop offset=".36" stop-color="#8ee6f0"/><stop offset=".72" stop-color="#f8f088"/><stop offset="1" stop-color="#ffae96"/></linearGradient></defs><g transform="translate(11 475)"><path d="M3.2 15.3H15.7V4.8" fill="none" stroke="#5e6e86" stroke-width="1.3"/><path d="M2 .3H11.2L14.700 3.900V14.600H2z" fill="url(#pg8)"/><path d="M2 14.600V.3H11.2" fill="none" stroke="#6c98e2" stroke-width="1.100"/><path d="M11.2 .3l3.500 3.600V14.600H2" fill="none" stroke="#7272b4" stroke-width="1.100"/><path d="M11.2 .3V3.900H14.700z" fill="#7878bc" stroke="#6a6aae" stroke-width=".6"/><circle cx="3.100" cy="3" r="2.300" fill="#ee7c4c"/><circle cx="3.100" cy="3" r="1.100" fill="#f6ee68"/><path d="M.3 .2l.9.9M5.900 .2l-.9.9M.3 5.800l.9-.9M5.900 5.800l-.9-.9" stroke="#e8683c" stroke-width="1.100" stroke-linecap="round"/></g><g transform="translate(34 475)"><path d="M8.100 2.900C9.600 .3 12.600 .4 13.600 3" fill="none" stroke="#4a68a4" stroke-width="1.200"/><path d="M11.900 4.400L15.100 1.900V5.200z" fill="#3c5a98"/><path d="M.7 14.600V4Q.7 3.200 1.500 3.200H5.600L7 4.900H13Q13.700 4.900 13.700 5.700V8" fill="url(#fo8)" stroke="#c4900c" stroke-width="1.200"/><path d="M2.900 7.700H15.200L13.400 15H.6z" fill="url(#fo8)" stroke="#c4900c" stroke-width="1.200" stroke-linejoin="round"/><path d="M3.700 8.800H13.800" stroke="#fffde0" stroke-width="1"/></g><g transform="translate(58 475)"><path d="M1.200 15.100H14.700V2.200" fill="none" stroke="#4c5a78" stroke-width="1.100"/><rect x=".1" y="1" width="13.900" height="13.600" fill="url(#sv8)"/><path d="M.6 14.600V1.500H13.500" fill="none" stroke="#8080e8" stroke-width="1"/><rect x="3" y="2" width="8" height="5.700" fill="#f6f8fc"/><path d="M7 7.700L11 3.500V7.700z" fill="#dde4f2"/><path d="M3 8.200H11" stroke="#2c2c94" stroke-width="1"/><rect x="4.100" y="10.300" width="5.500" height="3.700" fill="#e8eaf4"/><rect x="4.100" y="10.300" width="2.300" height="2.200" fill="#101020"/><path d="M4.100 14l2.300-1.500H4.100z" fill="#303060"/></g><g transform="translate(81 475)"><path d="M1.400 .2H7.800L9.200 5.200L3 5.600z" fill="#b4d0fa" stroke="#90a6dc" stroke-width=".8"/><path d="M2 1.200H7.800" stroke="#e4eeff" stroke-width="1.200"/><path d="M.5 7.300L3 5.400L10.600 5L13.800 8V11.600L9.200 15.300H5L.5 11.600z" fill="#cecece" stroke="#7c7c7c" stroke-width="1"/><path d="M.5 8.800L4.700 10.600L13.800 9M4.700 10.600V12" stroke="#8c8c8c" stroke-width=".9" fill="none"/><path d="M1.600 11.600L5 10.400L12.400 11.300L9 14.300H5.200z" fill="#f6f6f6" stroke="#9a9a9a" stroke-width=".7"/><path d="M5 14.900H9.200" stroke="#505050" stroke-width="1"/><rect x="11.400" y="9.500" width="1.300" height="1.600" fill="#58c058"/></g><g transform="translate(115 475)"><path d="M1.500 1.400V13.600L4.400 10.800L6.400 15.500L8.300 14.700L6.300 10.100H10.400z" fill="#fff" stroke="#000" stroke-width="1.100" stroke-linejoin="miter"/></g><g transform="translate(142 475)"><path d="M9.500 9.300L14.900 14.500" stroke="#a87830" stroke-width="3.300" stroke-linecap="round"/><path d="M10 9.300L15.100 14.100" stroke="#f6a828" stroke-width="2" stroke-linecap="round"/><path d="M8.600 8.600l1.600 1.500" stroke="#9a9aa8" stroke-width="1.600"/><circle cx="5.400" cy="5.450" r="4.850" fill="url(#ln8)" stroke="#989ee0" stroke-width="1.300"/><path d="M3.100 5.450h4.700" stroke="#203070" stroke-width="1.300"/><path d="M5.450 3.100v4.700" stroke="#203070" stroke-width="1.300"/></g><g transform="translate(165 475)"><path d="M9.500 9.300L14.900 14.500" stroke="#a87830" stroke-width="3.300" stroke-linecap="round"/><path d="M10 9.300L15.100 14.100" stroke="#f6a828" stroke-width="2" stroke-linecap="round"/><path d="M8.600 8.600l1.600 1.500" stroke="#9a9aa8" stroke-width="1.600"/><circle cx="5.400" cy="5.450" r="4.850" fill="url(#ln8)" stroke="#989ee0" stroke-width="1.300"/><path d="M3.100 5.450h4.700" stroke="#203070" stroke-width="1.300"/></g><g transform="translate(188 475)"><path d="M5.600 16V14.500L.3 8.500C-.4 7.500 .9 6.300 1.900 6.900L3.900 8.300L3.100 3.200C2.900 1.300 5 1 5.300 2.700L6.300 6.500L6.700 1.500C6.800 -.2 9.100 -.2 9.200 1.500L9.400 6.200L9.900 2.600C10.100 1 12.300 1.200 12.200 2.900L12 7L13.200 4.600C13.900 3.200 15.900 4 15.400 5.600C14.800 8 14.600 9.600 13.900 11.200L12.800 13.600V16z" fill="url(#hd8)" stroke="#2850c4" stroke-width="1.100" stroke-dasharray="1.500 .7" stroke-linejoin="round"/></g><g transform="translate(211 475)"><path d="M3.900 4.700A6 6 0 1 1 3.100 9.800" fill="none" stroke="#26407e" stroke-width="2.100"/><path d="M1.700 .3L.1 6.100L5.700 4.800z" fill="#2c4684"/><path d="M5.500 6.700L8.400 5.200L11.300 6.700V10L8.400 11.600L5.500 10z" fill="#eef2fc" stroke="#284080" stroke-width="1.200"/><path d="M5.500 6.700L8.400 8.200L11.300 6.700M8.400 8.200V11.600" stroke="#284080" stroke-width="1" fill="none"/><path d="M5.900 7.300L8 8.400V10.900L5.900 9.800z" fill="#b8c8f0"/></g><g transform="translate(234 475)"><path d="M6.200 10.500H15.600V1.300" fill="none" stroke="#8c9cb4" stroke-width="1"/><rect x="5.200" y=".4" width="9.700" height="9.500" fill="#fcf8bc" stroke="#a09a34" stroke-width="1.300"/><path d="M7.100 2.500h5.700M7.100 4.500h5.700M7.100 6.500h5.700" stroke="#a8a478" stroke-width="1"/><path d="M.5 3l.4 2.200M1.300 6.300l1 2.200" stroke="#0000ff" stroke-width="1.300" stroke-linecap="round"/><path d="M7.300 13.600l1.500.4M10 14.400l1.600.6M12.800 15.300h2" stroke="#0000ff" stroke-width="1.300" stroke-linecap="round"/><path d="M1 11h7.700M4.900 7.300v7.300" stroke="#000" stroke-width="1.900"/></g><g transform="translate(258 475)"><path d="M15.300 1.500L7.700 8.800" stroke="#3a4cb6" stroke-width="3" stroke-linecap="round"/><path d="M14.600 1.500L8.600 7.200" stroke="#e4eaff" stroke-width=".9" stroke-dasharray="1.500 .8"/><path d="M7 7.700l2.200 2.200" stroke="#f4f4f8" stroke-width="1.200"/><path d="M7 9.300L8.800 11.100C7.600 13.600 4.400 15.500 .4 15.100C.2 12.500 3 10 7 9.300z" fill="#4c4c4c" stroke="#2e2e2e" stroke-width=".7"/><path d="M2.500 13.700C3.500 12.300 4.800 11.300 6.300 10.700" stroke="#b8b8b8" stroke-width="1" fill="none"/><rect x="10" y="10" width="5" height="5.100" fill="#ff0000"/></g><path d="M281.2 482.2h4.700l-2.350 2.800z" fill="#222"/><g transform="translate(300 475)"><rect x="2.700" y=".7" width="10.300" height="7.800" fill="#fff" stroke="#284888" stroke-width="1.200"/><path d="M2.200 1.100H13.600" stroke="#284888" stroke-width="1.800"/><rect x=".7" y="3.800" width="10.100" height="8" fill="#f4f6fa" stroke="#284888" stroke-width="1.200"/><path d="M.1 4.200H11.400" stroke="#284888" stroke-width="1.800"/><rect x="2.200" y="6.400" width="6.400" height="3" fill="#e0e6f2"/><rect x="1.600" y="10" width="7.200" height="5" rx="2.500" fill="none" stroke="#a8c0e4" stroke-width="1.700"/><rect x="7.600" y="10" width="7.200" height="5" rx="2.500" fill="none" stroke="#a8c0e4" stroke-width="1.700"/><path d="M4.200 12.500H12.400" stroke="#283848" stroke-width="1.400" stroke-linecap="round"/><path d="M5.800 11.800H10.600" stroke="#f0f6ff" stroke-width="1"/></g><g transform="translate(331 475)"><path d="M4.200 15.500H13.900V1.200" fill="none" stroke="#70788c" stroke-width="1"/><rect x="3.700" y=".7" width="9" height="13.800" fill="url(#cb8)" stroke="#283c80" stroke-width="1.300"/></g><rect x="351.5" y="472.5" width="22" height="21" fill="#cbe3f7" stroke="#8cc6f6"/><g transform="translate(354 475)"><path d="M1.200 15.500H15.700V1.200" fill="none" stroke="#8c94a4" stroke-width="1"/><rect x=".8" y=".7" width="13.600" height="13.600" fill="#fff" stroke="#283c78" stroke-width="1.300"/><rect x="2.200" y="3.100" width="4.600" height="3.600" fill="#e8585c"/><rect x="2.200" y="9.200" width="4.600" height="3.500" fill="#5c5ce4"/><path d="M9 4.500h3.900M9 10.500h3.900" stroke="#101010" stroke-width="1.300"/><rect x="7.600" y="6.800" width="6" height="2.200" fill="#e6ecf8"/></g><g transform="translate(387 475)"><rect x="1.300" y="3.100" width="10.400" height="10.500" fill="#848484"/><rect x="2" y="5" width="8" height="7" fill="#a2a2a2"/><path d="M1.800 3.600H11.200" stroke="#9c9c9c" stroke-width="1"/><path d="M12.200 4.300V14.100H2.300" stroke="#b4b4b4" stroke-width="1" fill="none"/></g><g transform="translate(408 475)"><path d="M1.200 15.500H15.700V2.200" fill="none" stroke="#8c94a4" stroke-width="1"/><rect x=".6" y="1.800" width="14" height="12.600" fill="#fff" stroke="#283c80" stroke-width="1.300"/><path d="M.6 2.200H14.600" stroke="#3c5cb0" stroke-width="1.600"/><rect x="3.900" y="3.700" width="7.400" height="7" fill="#fff" stroke="#283c80" stroke-width="1.100"/><path d="M1.300 12.500H14" stroke="#e6dfc0" stroke-width="1.600"/><path d="M1.300 13.200H14" stroke="#283c80" stroke-width="1" stroke-dasharray="1 .8"/><path d="M2.400 4v7.500M12.800 4v7.500" stroke="#c8c8d8" stroke-width="1" stroke-dasharray="1 1"/></g><path d="M103.5 474v21" stroke="#a4a4a4" stroke-width="1"/><path d="M104.5 474v21" stroke="#fbfbfb" stroke-width="1"/><path d="M134.5 474v21" stroke="#a4a4a4" stroke-width="1"/><path d="M135.5 474v21" stroke="#fbfbfb" stroke-width="1"/><path d="M292.5 474v21" stroke="#a4a4a4" stroke-width="1"/><path d="M293.5 474v21" stroke="#fbfbfb" stroke-width="1"/><path d="M323.5 474v21" stroke="#a4a4a4" stroke-width="1"/><path d="M324.5 474v21" stroke="#fbfbfb" stroke-width="1"/><path d="M377.5 474v21" stroke="#a4a4a4" stroke-width="1"/><path d="M378.5 474v21" stroke="#fbfbfb" stroke-width="1"/><rect x="81.5" y="530.5" width="433.0" height="342.0" fill="#fff"/><path d="M153.5 872.5v-4.3M153.5 530.5v4.3M225.5 872.5v-4.3M225.5 530.5v4.3M298.5 872.5v-4.3M298.5 530.5v4.3M370.5 872.5v-4.3M370.5 530.5v4.3M442.5 872.5v-4.3M442.5 530.5v4.3M81.5 579.5h4.3M514.5 579.5h-4.3M81.5 628.5h4.3M514.5 628.5h-4.3M81.5 677.5h4.3M514.5 677.5h-4.3M81.5 726.5h4.3M514.5 726.5h-4.3M81.5 775.5h4.3M514.5 775.5h-4.3M81.5 824.5h4.3M514.5 824.5h-4.3" stroke="#262626" stroke-width="1" fill="none"/><rect x="81.5" y="530.5" width="433.0" height="342.0" fill="none" stroke="#262626" stroke-width="1"/><text x="81.4" y="892.2" font-size="13.33" text-anchor="middle" fill="#262626">0</text><text x="153.4" y="892.2" font-size="13.33" text-anchor="middle" fill="#262626">5</text><text x="225.4" y="892.2" font-size="13.33" text-anchor="middle" fill="#262626">10</text><text x="298.4" y="892.2" font-size="13.33" text-anchor="middle" fill="#262626">15</text><text x="370.4" y="892.2" font-size="13.33" text-anchor="middle" fill="#262626">20</text><text x="442.4" y="892.2" font-size="13.33" text-anchor="middle" fill="#262626">25</text><text x="515.4" y="892.2" font-size="13.33" text-anchor="middle" fill="#262626">30</text><text x="75.4" y="536.15" font-size="13.33" text-anchor="end" fill="#262626">0.14</text><text x="75.4" y="585.15" font-size="13.33" text-anchor="end" fill="#262626">0.12</text><text x="75.4" y="634.15" font-size="13.33" text-anchor="end" fill="#262626">0.1</text><text x="75.4" y="683.15" font-size="13.33" text-anchor="end" fill="#262626">0.08</text><text x="75.4" y="732.15" font-size="13.33" text-anchor="end" fill="#262626">0.06</text><text x="75.4" y="781.15" font-size="13.33" text-anchor="end" fill="#262626">0.04</text><text x="75.4" y="830.15" font-size="13.33" text-anchor="end" fill="#262626">0.02</text><text x="75.4" y="879.15" font-size="13.33" text-anchor="end" fill="#262626">0</text><text x="298" y="911.5" font-size="14.67" text-anchor="middle" fill="#262626">n</text><text transform="translate(41.5 700.5) rotate(-90)" font-size="14.67" text-anchor="middle" fill="#262626">Current-IAE(A)</text><text x="298" y="523.7" font-size="14.67" text-anchor="middle" fill="#262626" font-family='"Liberation Serif", "Noto Serif CJK SC", serif' font-weight="300">电流绝对误差</text><polyline points="95.47,815.8 109.93,833.3 124.4,849.8 138.87,868.5 153.33,861.6 167.8,848.4 182.27,838.9 196.73,825.6 211.2,816.9 225.67,808.45 240.13,804.55 254.6,800.5 269.07,802.3 283.53,803.5 298,822.7 312.47,849 326.93,860.2 341.4,811.5 355.87,757.8 370.33,714.65 384.8,689.85 399.27,699.3 413.73,751.6 428.2,850.2 442.67,722 457.13,559.1" fill="none" stroke="#000000" stroke-width="1" stroke-linejoin="round"/><circle cx="95.47" cy="815.8" r="3.8" fill="none" stroke="#000000" stroke-width="1.15"/><circle cx="109.93" cy="833.3" r="3.8" fill="none" stroke="#000000" stroke-width="1.15"/><circle cx="124.4" cy="849.8" r="3.8" fill="none" stroke="#000000" stroke-width="1.15"/><circle cx="138.87" cy="868.5" r="3.8" fill="none" stroke="#000000" stroke-width="1.15"/><circle cx="153.33" cy="861.6" r="3.8" fill="none" stroke="#000000" stroke-width="1.15"/><circle cx="167.8" cy="848.4" r="3.8" fill="none" stroke="#000000" stroke-width="1.15"/><circle cx="182.27" cy="838.9" r="3.8" fill="none" stroke="#000000" stroke-width="1.15"/><circle cx="196.73" cy="825.6" r="3.8" fill="none" stroke="#000000" stroke-width="1.15"/><circle cx="211.2" cy="816.9" r="3.8" fill="none" stroke="#000000" stroke-width="1.15"/><circle cx="225.67" cy="808.45" r="3.8" fill="none" stroke="#000000" stroke-width="1.15"/><circle cx="240.13" cy="804.55" r="3.8" fill="none" stroke="#000000" stroke-width="1.15"/><circle cx="254.6" cy="800.5" r="3.8" fill="none" stroke="#000000" stroke-width="1.15"/><circle cx="269.07" cy="802.3" r="3.8" fill="none" stroke="#000000" stroke-width="1.15"/><circle cx="283.53" cy="803.5" r="3.8" fill="none" stroke="#000000" stroke-width="1.15"/><circle cx="298" cy="822.7" r="3.8" fill="none" stroke="#000000" stroke-width="1.15"/><circle cx="312.47" cy="849" r="3.8" fill="none" stroke="#000000" stroke-width="1.15"/><circle cx="326.93" cy="860.2" r="3.8" fill="none" stroke="#000000" stroke-width="1.15"/><circle cx="341.4" cy="811.5" r="3.8" fill="none" stroke="#000000" stroke-width="1.15"/><circle cx="355.87" cy="757.8" r="3.8" fill="none" stroke="#000000" stroke-width="1.15"/><circle cx="370.33" cy="714.65" r="3.8" fill="none" stroke="#000000" stroke-width="1.15"/><circle cx="384.8" cy="689.85" r="3.8" fill="none" stroke="#000000" stroke-width="1.15"/><circle cx="399.27" cy="699.3" r="3.8" fill="none" stroke="#000000" stroke-width="1.15"/><circle cx="413.73" cy="751.6" r="3.8" fill="none" stroke="#000000" stroke-width="1.15"/><circle cx="428.2" cy="850.2" r="3.8" fill="none" stroke="#000000" stroke-width="1.15"/><circle cx="442.67" cy="722" r="3.8" fill="none" stroke="#000000" stroke-width="1.15"/><circle cx="457.13" cy="559.1" r="3.8" fill="none" stroke="#000000" stroke-width="1.15"/><rect x="348.5" y="567.5" width="77.500" height="19.500" fill="#fff" stroke="#262626"/><path d="M352.5 577.5h40" stroke="#000000" stroke-width="1"/><circle cx="372.5" cy="577.5" r="3.8" fill="none" stroke="#000000" stroke-width="1.15"/><text x="395.5" y="581.9" font-size="12" text-anchor="start" fill="#000">GOA</text>
<rect x="556" y="417" width="15.500" height="503" fill="url(#shL)"/>
<rect x="1116" y="407" width="17" height="10" fill="url(#shU)"/>
<radialGradient id="shC" cx="0" cy="1" r="1"><stop offset="0" stop-color="#000" stop-opacity=".18"/><stop offset=".45" stop-color="#000" stop-opacity=".06"/><stop offset="1" stop-color="#000" stop-opacity="0"/></radialGradient><rect x="1133" y="403" width="14" height="14" fill="url(#shC)"/>
<rect x="571.5" y="416.5" width="561" height="506" fill="#f0f0f0" stroke="#55554c"/><rect x="572" y="417" width="560" height="56.500" fill="#fff"/><g transform="translate(580 423)"><rect x=".5" y=".5" width="15" height="15" rx="1.200" fill="#f4f4f6" stroke="#a4acb8"/><rect x="1" y="1" width="14" height="1.700" fill="#86b6e2"/><path d="M.8 3.100h14.400" stroke="#b4bcc8" stroke-width=".7"/><path d="M2 9.700L7.600 6l2-2.200L7 10.400 5.400 12z" fill="#3c84c8"/><path d="M9.400 3.900c.8.600 1.600 3.400 3.400 8.200-.900-.2-1.700-1.100-2.500-1.100s-1.900 1.700-3.100 2.600c-.7-.4-1.300-.9-1.800-1.600 1.500-1.400 2.600-5.100 4-8.100z" fill="#e2582a"/><path d="M9.400 3.900c.5 1.300.7 4 .9 7.100-1 .1-2 1.500-3.100 2.600-.5-.3-.9-.6-1.200-1 1.400-1.800 2.400-5.300 3.400-8.700z" fill="#f49a2c"/><path d="M9.400 3.900c.7 1 1.900 4.100 3.400 8.200-1-.3-1.600-1-2.300-1.100-.3-3-.7-5.600-1.100-7.100z" fill="#b83a2c"/></g><text x="601.5" y="436.3" font-size="12.3" text-anchor="start" fill="#000" letter-spacing=".2">Figure 5</text><path d="M1013 431.5h10" stroke="#000" stroke-width="1"/><rect x="1058.5" y="426.5" width="9" height="9" fill="none" stroke="#000" stroke-width="1"/><path d="M1104 426.0l10 10M1114 426.0l-10 10" stroke="#000" stroke-width="1.050"/><text x="579.5" y="464.3" font-size="12" text-anchor="start" fill="#000">文件(F)</text><text x="635" y="464.3" font-size="12" text-anchor="start" fill="#000">编辑(E)</text><text x="690" y="464.3" font-size="12" text-anchor="start" fill="#000">查看(V)</text><text x="747" y="464.3" font-size="12" text-anchor="start" fill="#000">插入(I)</text><text x="800" y="464.3" font-size="12" text-anchor="start" fill="#000">工具(T)</text><text x="855" y="464.3" font-size="12" text-anchor="start" fill="#000">桌面(D)</text><text x="912.5" y="464.3" font-size="12" text-anchor="start" fill="#000">窗口(W)</text><text x="973" y="464.3" font-size="12" text-anchor="start" fill="#000">帮助(H)</text><g transform="translate(572 417)"><rect x="548" y="41" width="1.1" height="1.1" fill="#000"/><path d="M549.300 40.600H551.600L553.800 43" stroke="#000" stroke-width="1.500" fill="none"/><path d="M554.900 40V44.900H550V43.900L552.200 43.600L553.700 42L553.900 40z" fill="#000"/></g><path d="M572 473.5h560" stroke="#a0a0a0"/><path d="M572 500.5h560" stroke="#a0a0a0"/><defs><linearGradient id="pg572" x1="0" y1="0" x2="1" y2="1"><stop offset="0" stop-color="#ffffff"/><stop offset="1" stop-color="#d4e6fc"/></linearGradient><linearGradient id="fo572" x1="0" y1="0" x2="0" y2="1"><stop offset="0" stop-color="#fffaa8"/><stop offset="1" stop-color="#f6cc48"/></linearGradient><linearGradient id="sv572" x1="0" y1="0" x2="1" y2="1"><stop offset="0" stop-color="#6666dc"/><stop offset="1" stop-color="#34349a"/></linearGradient><linearGradient id="hd572" x1="0" y1="0" x2=".6" y2="1"><stop offset="0" stop-color="#fff0d8"/><stop offset=".5" stop-color="#fde0c4"/><stop offset="1" stop-color="#eeac6c"/></linearGradient><linearGradient id="ln572" x1="0" y1="0" x2="1" y2="1"><stop offset="0" stop-color="#ffffff"/><stop offset="1" stop-color="#c4eef4"/></linearGradient><linearGradient id="cb572" x1="0" y1="0" x2="0" y2="1"><stop offset="0" stop-color="#a49cf8"/><stop offset=".36" stop-color="#8ee6f0"/><stop offset=".72" stop-color="#f8f088"/><stop offset="1" stop-color="#ffae96"/></linearGradient></defs><g transform="translate(575 478)"><path d="M3.2 15.3H15.7V4.8" fill="none" stroke="#5e6e86" stroke-width="1.3"/><path d="M2 .3H11.2L14.700 3.900V14.600H2z" fill="url(#pg572)"/><path d="M2 14.600V.3H11.2" fill="none" stroke="#6c98e2" stroke-width="1.100"/><path d="M11.2 .3l3.500 3.600V14.600H2" fill="none" stroke="#7272b4" stroke-width="1.100"/><path d="M11.2 .3V3.900H14.700z" fill="#7878bc" stroke="#6a6aae" stroke-width=".6"/><circle cx="3.100" cy="3" r="2.300" fill="#ee7c4c"/><circle cx="3.100" cy="3" r="1.100" fill="#f6ee68"/><path d="M.3 .2l.9.9M5.900 .2l-.9.9M.3 5.800l.9-.9M5.900 5.800l-.9-.9" stroke="#e8683c" stroke-width="1.100" stroke-linecap="round"/></g><g transform="translate(598 478)"><path d="M8.100 2.900C9.600 .3 12.600 .4 13.600 3" fill="none" stroke="#4a68a4" stroke-width="1.200"/><path d="M11.900 4.400L15.100 1.900V5.200z" fill="#3c5a98"/><path d="M.7 14.600V4Q.7 3.200 1.500 3.200H5.600L7 4.900H13Q13.700 4.900 13.700 5.700V8" fill="url(#fo572)" stroke="#c4900c" stroke-width="1.200"/><path d="M2.900 7.700H15.200L13.400 15H.6z" fill="url(#fo572)" stroke="#c4900c" stroke-width="1.200" stroke-linejoin="round"/><path d="M3.700 8.800H13.800" stroke="#fffde0" stroke-width="1"/></g><g transform="translate(622 478)"><path d="M1.200 15.100H14.700V2.200" fill="none" stroke="#4c5a78" stroke-width="1.100"/><rect x=".1" y="1" width="13.900" height="13.600" fill="url(#sv572)"/><path d="M.6 14.600V1.500H13.500" fill="none" stroke="#8080e8" stroke-width="1"/><rect x="3" y="2" width="8" height="5.700" fill="#f6f8fc"/><path d="M7 7.700L11 3.500V7.700z" fill="#dde4f2"/><path d="M3 8.200H11" stroke="#2c2c94" stroke-width="1"/><rect x="4.100" y="10.300" width="5.500" height="3.700" fill="#e8eaf4"/><rect x="4.100" y="10.300" width="2.300" height="2.200" fill="#101020"/><path d="M4.100 14l2.300-1.500H4.100z" fill="#303060"/></g><g transform="translate(645 478)"><path d="M1.400 .2H7.800L9.200 5.200L3 5.600z" fill="#b4d0fa" stroke="#90a6dc" stroke-width=".8"/><path d="M2 1.200H7.800" stroke="#e4eeff" stroke-width="1.200"/><path d="M.5 7.300L3 5.400L10.600 5L13.800 8V11.600L9.200 15.300H5L.5 11.600z" fill="#cecece" stroke="#7c7c7c" stroke-width="1"/><path d="M.5 8.800L4.700 10.600L13.800 9M4.700 10.600V12" stroke="#8c8c8c" stroke-width=".9" fill="none"/><path d="M1.600 11.600L5 10.400L12.400 11.300L9 14.300H5.200z" fill="#f6f6f6" stroke="#9a9a9a" stroke-width=".7"/><path d="M5 14.900H9.200" stroke="#505050" stroke-width="1"/><rect x="11.400" y="9.500" width="1.300" height="1.600" fill="#58c058"/></g><g transform="translate(679 478)"><path d="M1.500 1.400V13.600L4.400 10.800L6.400 15.500L8.300 14.700L6.300 10.100H10.400z" fill="#fff" stroke="#000" stroke-width="1.100" stroke-linejoin="miter"/></g><g transform="translate(706 478)"><path d="M9.500 9.300L14.900 14.500" stroke="#a87830" stroke-width="3.300" stroke-linecap="round"/><path d="M10 9.300L15.100 14.100" stroke="#f6a828" stroke-width="2" stroke-linecap="round"/><path d="M8.600 8.600l1.600 1.500" stroke="#9a9aa8" stroke-width="1.600"/><circle cx="5.400" cy="5.450" r="4.850" fill="url(#ln572)" stroke="#989ee0" stroke-width="1.300"/><path d="M3.100 5.450h4.700" stroke="#203070" stroke-width="1.300"/><path d="M5.450 3.100v4.700" stroke="#203070" stroke-width="1.300"/></g><g transform="translate(729 478)"><path d="M9.500 9.300L14.900 14.500" stroke="#a87830" stroke-width="3.300" stroke-linecap="round"/><path d="M10 9.300L15.100 14.100" stroke="#f6a828" stroke-width="2" stroke-linecap="round"/><path d="M8.600 8.600l1.600 1.500" stroke="#9a9aa8" stroke-width="1.600"/><circle cx="5.400" cy="5.450" r="4.850" fill="url(#ln572)" stroke="#989ee0" stroke-width="1.300"/><path d="M3.100 5.450h4.700" stroke="#203070" stroke-width="1.300"/></g><g transform="translate(752 478)"><path d="M5.600 16V14.500L.3 8.500C-.4 7.500 .9 6.300 1.900 6.900L3.900 8.300L3.100 3.200C2.900 1.300 5 1 5.300 2.700L6.300 6.500L6.700 1.500C6.800 -.2 9.100 -.2 9.200 1.500L9.400 6.200L9.900 2.600C10.100 1 12.300 1.200 12.200 2.900L12 7L13.200 4.600C13.900 3.200 15.900 4 15.400 5.600C14.800 8 14.600 9.600 13.900 11.200L12.800 13.600V16z" fill="url(#hd572)" stroke="#2850c4" stroke-width="1.100" stroke-dasharray="1.500 .7" stroke-linejoin="round"/></g><g transform="translate(775 478)"><path d="M3.900 4.700A6 6 0 1 1 3.100 9.800" fill="none" stroke="#26407e" stroke-width="2.100"/><path d="M1.700 .3L.1 6.100L5.700 4.800z" fill="#2c4684"/><path d="M5.500 6.700L8.400 5.200L11.300 6.700V10L8.400 11.600L5.500 10z" fill="#eef2fc" stroke="#284080" stroke-width="1.200"/><path d="M5.500 6.700L8.400 8.200L11.300 6.700M8.400 8.200V11.600" stroke="#284080" stroke-width="1" fill="none"/><path d="M5.900 7.300L8 8.400V10.900L5.900 9.800z" fill="#b8c8f0"/></g><g transform="translate(798 478)"><path d="M6.200 10.500H15.600V1.300" fill="none" stroke="#8c9cb4" stroke-width="1"/><rect x="5.200" y=".4" width="9.700" height="9.500" fill="#fcf8bc" stroke="#a09a34" stroke-width="1.300"/><path d="M7.100 2.500h5.700M7.100 4.500h5.700M7.100 6.500h5.700" stroke="#a8a478" stroke-width="1"/><path d="M.5 3l.4 2.200M1.300 6.300l1 2.200" stroke="#0000ff" stroke-width="1.300" stroke-linecap="round"/><path d="M7.300 13.600l1.500.4M10 14.400l1.600.6M12.800 15.300h2" stroke="#0000ff" stroke-width="1.300" stroke-linecap="round"/><path d="M1 11h7.700M4.900 7.300v7.300" stroke="#000" stroke-width="1.900"/></g><g transform="translate(822 478)"><path d="M15.300 1.500L7.700 8.800" stroke="#3a4cb6" stroke-width="3" stroke-linecap="round"/><path d="M14.600 1.500L8.600 7.200" stroke="#e4eaff" stroke-width=".9" stroke-dasharray="1.500 .8"/><path d="M7 7.700l2.200 2.200" stroke="#f4f4f8" stroke-width="1.200"/><path d="M7 9.300L8.800 11.100C7.600 13.600 4.400 15.500 .4 15.100C.2 12.500 3 10 7 9.300z" fill="#4c4c4c" stroke="#2e2e2e" stroke-width=".7"/><path d="M2.500 13.700C3.500 12.300 4.800 11.300 6.300 10.700" stroke="#b8b8b8" stroke-width="1" fill="none"/><rect x="10" y="10" width="5" height="5.100" fill="#ff0000"/></g><path d="M845.2 485.2h4.700l-2.350 2.800z" fill="#222"/><g transform="translate(864 478)"><rect x="2.700" y=".7" width="10.300" height="7.800" fill="#fff" stroke="#284888" stroke-width="1.200"/><path d="M2.200 1.100H13.600" stroke="#284888" stroke-width="1.800"/><rect x=".7" y="3.800" width="10.100" height="8" fill="#f4f6fa" stroke="#284888" stroke-width="1.200"/><path d="M.1 4.200H11.400" stroke="#284888" stroke-width="1.800"/><rect x="2.200" y="6.400" width="6.400" height="3" fill="#e0e6f2"/><rect x="1.600" y="10" width="7.200" height="5" rx="2.500" fill="none" stroke="#a8c0e4" stroke-width="1.700"/><rect x="7.600" y="10" width="7.200" height="5" rx="2.500" fill="none" stroke="#a8c0e4" stroke-width="1.700"/><path d="M4.200 12.500H12.400" stroke="#283848" stroke-width="1.400" stroke-linecap="round"/><path d="M5.800 11.800H10.600" stroke="#f0f6ff" stroke-width="1"/></g><g transform="translate(895 478)"><path d="M4.200 15.500H13.900V1.200" fill="none" stroke="#70788c" stroke-width="1"/><rect x="3.700" y=".7" width="9" height="13.800" fill="url(#cb572)" stroke="#283c80" stroke-width="1.300"/></g><rect x="915.5" y="475.5" width="22" height="21" fill="#cbe3f7" stroke="#8cc6f6"/><g transform="translate(918 478)"><path d="M1.200 15.500H15.700V1.200" fill="none" stroke="#8c94a4" stroke-width="1"/><rect x=".8" y=".7" width="13.600" height="13.600" fill="#fff" stroke="#283c78" stroke-width="1.300"/><rect x="2.200" y="3.100" width="4.600" height="3.600" fill="#e8585c"/><rect x="2.200" y="9.200" width="4.600" height="3.500" fill="#5c5ce4"/><path d="M9 4.500h3.900M9 10.500h3.900" stroke="#101010" stroke-width="1.300"/><rect x="7.600" y="6.800" width="6" height="2.200" fill="#e6ecf8"/></g><g transform="translate(951 478)"><rect x="1.300" y="3.100" width="10.400" height="10.500" fill="#848484"/><rect x="2" y="5" width="8" height="7" fill="#a2a2a2"/><path d="M1.800 3.600H11.200" stroke="#9c9c9c" stroke-width="1"/><path d="M12.200 4.300V14.100H2.300" stroke="#b4b4b4" stroke-width="1" fill="none"/></g><g transform="translate(972 478)"><path d="M1.200 15.500H15.700V2.200" fill="none" stroke="#8c94a4" stroke-width="1"/><rect x=".6" y="1.800" width="14" height="12.600" fill="#fff" stroke="#283c80" stroke-width="1.300"/><path d="M.6 2.200H14.600" stroke="#3c5cb0" stroke-width="1.600"/><rect x="3.900" y="3.700" width="7.400" height="7" fill="#fff" stroke="#283c80" stroke-width="1.100"/><path d="M1.300 12.500H14" stroke="#e6dfc0" stroke-width="1.600"/><path d="M1.300 13.200H14" stroke="#283c80" stroke-width="1" stroke-dasharray="1 .8"/><path d="M2.400 4v7.500M12.800 4v7.500" stroke="#c8c8d8" stroke-width="1" stroke-dasharray="1 1"/></g><path d="M667.5 477v21" stroke="#a4a4a4" stroke-width="1"/><path d="M668.5 477v21" stroke="#fbfbfb" stroke-width="1"/><path d="M698.5 477v21" stroke="#a4a4a4" stroke-width="1"/><path d="M699.5 477v21" stroke="#fbfbfb" stroke-width="1"/><path d="M856.5 477v21" stroke="#a4a4a4" stroke-width="1"/><path d="M857.5 477v21" stroke="#fbfbfb" stroke-width="1"/><path d="M887.5 477v21" stroke="#a4a4a4" stroke-width="1"/><path d="M888.5 477v21" stroke="#fbfbfb" stroke-width="1"/><path d="M941.5 477v21" stroke="#a4a4a4" stroke-width="1"/><path d="M942.5 477v21" stroke="#fbfbfb" stroke-width="1"/><rect x="645.5" y="533.5" width="433.0" height="342.0" fill="#fff"/><path d="M717.5 875.5v-4.3M717.5 533.5v4.3M789.5 875.5v-4.3M789.5 533.5v4.3M862.5 875.5v-4.3M862.5 533.5v4.3M934.5 875.5v-4.3M934.5 533.5v4.3M1006.5 875.5v-4.3M1006.5 533.5v4.3M645.5 575.5h4.3M1078.5 575.5h-4.3M645.5 618.5h4.3M1078.5 618.5h-4.3M645.5 661.5h4.3M1078.5 661.5h-4.3M645.5 704.5h4.3M1078.5 704.5h-4.3M645.5 747.5h4.3M1078.5 747.5h-4.3M645.5 790.5h4.3M1078.5 790.5h-4.3M645.5 833.5h4.3M1078.5 833.5h-4.3" stroke="#262626" stroke-width="1" fill="none"/><rect x="645.5" y="533.5" width="433.0" height="342.0" fill="none" stroke="#262626" stroke-width="1"/><text x="645.4" y="895.2" font-size="13.33" text-anchor="middle" fill="#262626">0</text><text x="717.4" y="895.2" font-size="13.33" text-anchor="middle" fill="#262626">5</text><text x="789.4" y="895.2" font-size="13.33" text-anchor="middle" fill="#262626">10</text><text x="862.4" y="895.2" font-size="13.33" text-anchor="middle" fill="#262626">15</text><text x="934.4" y="895.2" font-size="13.33" text-anchor="middle" fill="#262626">20</text><text x="1006.4" y="895.2" font-size="13.33" text-anchor="middle" fill="#262626">25</text><text x="1079.4" y="895.2" font-size="13.33" text-anchor="middle" fill="#262626">30</text><text x="639.4" y="539.15" font-size="13.33" text-anchor="end" fill="#262626">0.08</text><text x="639.4" y="581.15" font-size="13.33" text-anchor="end" fill="#262626">0.07</text><text x="639.4" y="624.15" font-size="13.33" text-anchor="end" fill="#262626">0.06</text><text x="639.4" y="667.15" font-size="13.33" text-anchor="end" fill="#262626">0.05</text><text x="639.4" y="710.15" font-size="13.33" text-anchor="end" fill="#262626">0.04</text><text x="639.4" y="753.15" font-size="13.33" text-anchor="end" fill="#262626">0.03</text><text x="639.4" y="796.15" font-size="13.33" text-anchor="end" fill="#262626">0.02</text><text x="639.4" y="839.15" font-size="13.33" text-anchor="end" fill="#262626">0.01</text><text x="639.4" y="882.15" font-size="13.33" text-anchor="end" fill="#262626">0</text><text x="862" y="914.5" font-size="14.67" text-anchor="middle" fill="#262626">n</text><text transform="translate(605.5 703.5) rotate(-90)" font-size="14.67" text-anchor="middle" fill="#262626">Power-IAE(P)</text><text x="862" y="526.7" font-size="14.67" text-anchor="middle" fill="#262626" font-family='"Liberation Serif", "Noto Serif CJK SC", serif' font-weight="300">功率绝对误差</text><polyline points="659.47,855.41 673.93,867.03 688.4,873.61 702.87,875.96 717.33,874.71 731.8,870.9 746.27,865.99 760.73,858.32 775.2,851.01 789.67,842.97 804.13,836.84 818.6,830.52 833.07,828.08 847.53,825.68 862,837.51 876.47,856.72 890.93,865.28 905.4,822.62 919.87,772.8 934.33,730.1 948.8,702.99 963.27,708.18 977.73,756.33 992.2,853.11 1006.67,721.86 1021.13,551.9" fill="none" stroke="#0000ff" stroke-width="1" stroke-linejoin="round"/><path d="M655.3 855.5H663.7M659.5 851.3V859.7" stroke="#0000ff" stroke-width="1.15" fill="none"/><path d="M656.5 852.5L662.5 858.5M656.5 858.5L662.5 852.5" stroke="#0000ff" stroke-width="0.9" stroke-opacity=".8" fill="none"/><path d="M669.3 867.5H677.7M673.5 863.3V871.7" stroke="#0000ff" stroke-width="1.15" fill="none"/><path d="M670.5 864.5L676.5 870.5M670.5 870.5L676.5 864.5" stroke="#0000ff" stroke-width="0.9" stroke-opacity=".8" fill="none"/><path d="M684.3 873.5H692.7M688.5 869.3V877.7" stroke="#0000ff" stroke-width="1.15" fill="none"/><path d="M685.5 870.5L691.5 876.5M685.5 876.5L691.5 870.5" stroke="#0000ff" stroke-width="0.9" stroke-opacity=".8" fill="none"/><path d="M698.3 875.5H706.7M702.5 871.3V879.7" stroke="#0000ff" stroke-width="1.15" fill="none"/><path d="M699.5 872.5L705.5 878.5M699.5 878.5L705.5 872.5" stroke="#0000ff" stroke-width="0.9" stroke-opacity=".8" fill="none"/><path d="M713.3 874.5H721.7M717.5 870.3V878.7" stroke="#0000ff" stroke-width="1.15" fill="none"/><path d="M714.5 871.5L720.5 877.5M714.5 877.5L720.5 871.5" stroke="#0000ff" stroke-width="0.9" stroke-opacity=".8" fill="none"/><path d="M727.3 870.5H735.7M731.5 866.3V874.7" stroke="#0000ff" stroke-width="1.15" fill="none"/><path d="M728.5 867.5L734.5 873.5M728.5 873.5L734.5 867.5" stroke="#0000ff" stroke-width="0.9" stroke-opacity=".8" fill="none"/><path d="M742.3 865.5H750.7M746.5 861.3V869.7" stroke="#0000ff" stroke-width="1.15" fill="none"/><path d="M743.5 862.5L749.5 868.5M743.5 868.5L749.5 862.5" stroke="#0000ff" stroke-width="0.9" stroke-opacity=".8" fill="none"/><path d="M756.3 858.5H764.7M760.5 854.3V862.7" stroke="#0000ff" stroke-width="1.15" fill="none"/><path d="M757.5 855.5L763.5 861.5M757.5 861.5L763.5 855.5" stroke="#0000ff" stroke-width="0.9" stroke-opacity=".8" fill="none"/><path d="M771.3 851.5H779.7M775.5 847.3V855.7" stroke="#0000ff" stroke-width="1.15" fill="none"/><path d="M772.5 848.5L778.5 854.5M772.5 854.5L778.5 848.5" stroke="#0000ff" stroke-width="0.9" stroke-opacity=".8" fill="none"/><path d="M785.3 842.5H793.7M789.5 838.3V846.7" stroke="#0000ff" stroke-width="1.15" fill="none"/><path d="M786.5 839.5L792.5 845.5M786.5 845.5L792.5 839.5" stroke="#0000ff" stroke-width="0.9" stroke-opacity=".8" fill="none"/><path d="M800.3 836.5H808.7M804.5 832.3V840.7" stroke="#0000ff" stroke-width="1.15" fill="none"/><path d="M801.5 833.5L807.5 839.5M801.5 839.5L807.5 833.5" stroke="#0000ff" stroke-width="0.9" stroke-opacity=".8" fill="none"/><path d="M814.3 830.5H822.7M818.5 826.3V834.7" stroke="#0000ff" stroke-width="1.15" fill="none"/><path d="M815.5 827.5L821.5 833.5M815.5 833.5L821.5 827.5" stroke="#0000ff" stroke-width="0.9" stroke-opacity=".8" fill="none"/><path d="M829.3 828.5H837.7M833.5 824.3V832.7" stroke="#0000ff" stroke-width="1.15" fill="none"/><path d="M830.5 825.5L836.5 831.5M830.5 831.5L836.5 825.5" stroke="#0000ff" stroke-width="0.9" stroke-opacity=".8" fill="none"/><path d="M843.3 825.5H851.7M847.5 821.3V829.7" stroke="#0000ff" stroke-width="1.15" fill="none"/><path d="M844.5 822.5L850.5 828.5M844.5 828.5L850.5 822.5" stroke="#0000ff" stroke-width="0.9" stroke-opacity=".8" fill="none"/><path d="M858.3 837.5H866.7M862.5 833.3V841.7" stroke="#0000ff" stroke-width="1.15" fill="none"/><path d="M859.5 834.5L865.5 840.5M859.5 840.5L865.5 834.5" stroke="#0000ff" stroke-width="0.9" stroke-opacity=".8" fill="none"/><path d="M872.3 856.5H880.7M876.5 852.3V860.7" stroke="#0000ff" stroke-width="1.15" fill="none"/><path d="M873.5 853.5L879.5 859.5M873.5 859.5L879.5 853.5" stroke="#0000ff" stroke-width="0.9" stroke-opacity=".8" fill="none"/><path d="M886.3 865.5H894.7M890.5 861.3V869.7" stroke="#0000ff" stroke-width="1.15" fill="none"/><path d="M887.5 862.5L893.5 868.5M887.5 868.5L893.5 862.5" stroke="#0000ff" stroke-width="0.9" stroke-opacity=".8" fill="none"/><path d="M901.3 822.5H909.7M905.5 818.3V826.7" stroke="#0000ff" stroke-width="1.15" fill="none"/><path d="M902.5 819.5L908.5 825.5M902.5 825.5L908.5 819.5" stroke="#0000ff" stroke-width="0.9" stroke-opacity=".8" fill="none"/><path d="M915.3 772.5H923.7M919.5 768.3V776.7" stroke="#0000ff" stroke-width="1.15" fill="none"/><path d="M916.5 769.5L922.5 775.5M916.5 775.5L922.5 769.5" stroke="#0000ff" stroke-width="0.9" stroke-opacity=".8" fill="none"/><path d="M930.3 730.5H938.7M934.5 726.3V734.7" stroke="#0000ff" stroke-width="1.15" fill="none"/><path d="M931.5 727.5L937.5 733.5M931.5 733.5L937.5 727.5" stroke="#0000ff" stroke-width="0.9" stroke-opacity=".8" fill="none"/><path d="M944.3 702.5H952.7M948.5 698.3V706.7" stroke="#0000ff" stroke-width="1.15" fill="none"/><path d="M945.5 699.5L951.5 705.5M945.5 705.5L951.5 699.5" stroke="#0000ff" stroke-width="0.9" stroke-opacity=".8" fill="none"/><path d="M959.3 708.5H967.7M963.5 704.3V712.7" stroke="#0000ff" stroke-width="1.15" fill="none"/><path d="M960.5 705.5L966.5 711.5M960.5 711.5L966.5 705.5" stroke="#0000ff" stroke-width="0.9" stroke-opacity=".8" fill="none"/><path d="M973.3 756.5H981.7M977.5 752.3V760.7" stroke="#0000ff" stroke-width="1.15" fill="none"/><path d="M974.5 753.5L980.5 759.5M974.5 759.5L980.5 753.5" stroke="#0000ff" stroke-width="0.9" stroke-opacity=".8" fill="none"/><path d="M988.3 853.5H996.7M992.5 849.3V857.7" stroke="#0000ff" stroke-width="1.15" fill="none"/><path d="M989.5 850.5L995.5 856.5M989.5 856.5L995.5 850.5" stroke="#0000ff" stroke-width="0.9" stroke-opacity=".8" fill="none"/><path d="M1002.3 721.5H1010.7M1006.5 717.3V725.7" stroke="#0000ff" stroke-width="1.15" fill="none"/><path d="M1003.5 718.5L1009.5 724.5M1003.5 724.5L1009.5 718.5" stroke="#0000ff" stroke-width="0.9" stroke-opacity=".8" fill="none"/><path d="M1017.3 551.5H1025.7M1021.5 547.3V555.7" stroke="#0000ff" stroke-width="1.15" fill="none"/><path d="M1018.5 548.5L1024.5 554.5M1018.5 554.5L1024.5 548.5" stroke="#0000ff" stroke-width="0.9" stroke-opacity=".8" fill="none"/><rect x="913.5" y="576.5" width="77.500" height="19.500" fill="#fff" stroke="#262626"/><path d="M917.5 586.5h40" stroke="#0000ff" stroke-width="1"/><path d="M933.3 586.5H941.7M937.5 582.3V590.7" stroke="#0000ff" stroke-width="1.15" fill="none"/><path d="M934.5 583.5L940.5 589.5M934.5 589.5L940.5 583.5" stroke="#0000ff" stroke-width="0.9" stroke-opacity=".8" fill="none"/><text x="960.5" y="590.9" font-size="12" text-anchor="start" fill="#000">GOA</text>
<rect x="0" y="920" width="1640" height="1" fill="#c8c8c8"/><rect x="572" y="920" width="1068" height="1" fill="#3a3a3a"/>
</svg></body></html>
